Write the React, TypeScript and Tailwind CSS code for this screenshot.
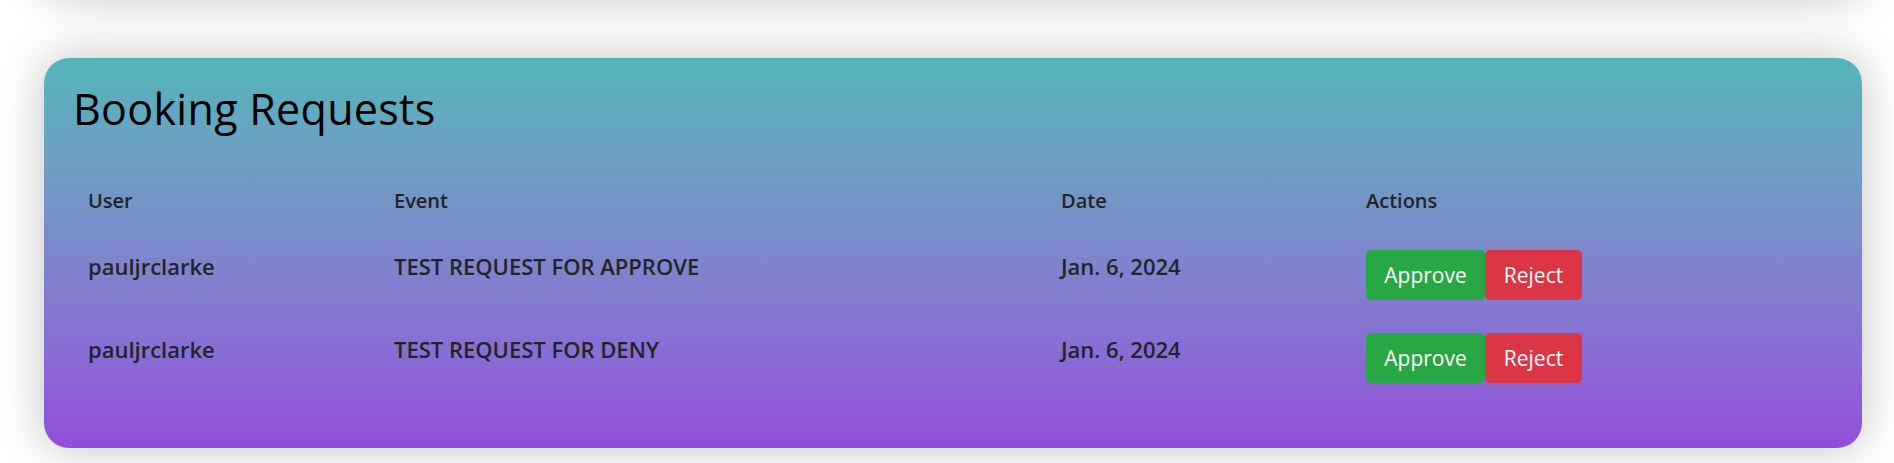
const rows = [
  { user: "pauljrclarke", event: "TEST REQUEST FOR APPROVE", date: "Jan. 6, 2024" },
  { user: "pauljrclarke", event: "TEST REQUEST FOR DENY", date: "Jan. 6, 2024" },
];

const cols = "grid grid-cols-[306px_667px_305px_1fr]";

const App = () => {
  return (
    <div className="flex flex-col bg-white min-h-screen font-['Open_Sans',sans-serif] text-[#212529]">
      {/* bottom of the card above, mostly off screen */}
      <div className="h-[100px] -mt-[105px] ml-[44px] mr-[32px] bg-white rounded-[25px] shadow-[0_0_45px_rgba(0,0,0,0.27)]" />

      <section className="mt-[63px] ml-[44px] mr-[32px] rounded-[25px] bg-linear-to-b from-[#52b5b8] to-[#914ddb] pt-[26px] pl-[29px] pr-[29px] pb-[46px] shadow-[0_0_45px_rgba(0,0,0,0.25)]">
        <h1 className="text-[43px] leading-[50px] font-normal tracking-[0.3px] text-black">
          Booking Requests
        </h1>

        <div className="mt-[37px]">
          <div className={`${cols} h-[65px] pt-[15px] text-[20px] leading-[30px] font-semibold`}>
            <div className="px-[15px]">User</div>
            <div className="px-[15px]">Event</div>
            <div className="px-[15px]">Date</div>
            <div className="px-[15px]">Actions</div>
          </div>

          {rows.map((r, i) => (
            <div key={i} className={`${cols} h-[83px] text-[22px] leading-[30px] font-semibold`}>
              <div className="px-[15px] pt-[15px]">{r.user}</div>
              <div className="px-[15px] pt-[15px]">{r.event}</div>
              <div className="px-[15px] pt-[15px]">{r.date}</div>
              <div className="px-[15px] pt-[14px] flex items-start">
                <button className="w-[119px] h-[50px] rounded-[5px] bg-[#28a745] text-white text-[21px] font-normal">
                  Approve
                </button>
                <button className="w-[97px] h-[50px] rounded-[5px] bg-[#dc3545] text-white text-[21px] font-normal">
                  Reject
                </button>
              </div>
            </div>
          ))}
        </div>
      </section>
    </div>
  );
};

export default App;
